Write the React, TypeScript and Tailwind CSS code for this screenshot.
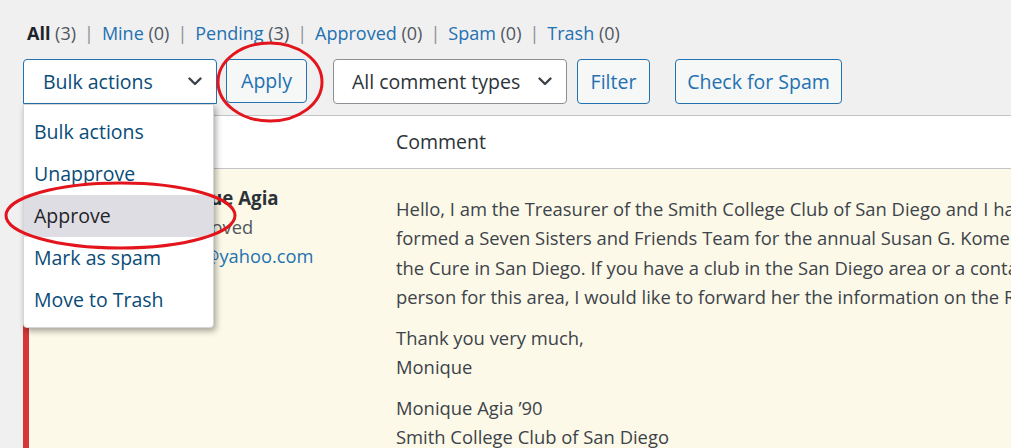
import React from "react";

function Chevron() {
  return (
    <svg width="14" height="9" viewBox="0 0 14 9" className="shrink-0">
      <polyline
        points="1.5,1.5 7,7 12.5,1.5"
        fill="none"
        stroke="#3c434a"
        strokeWidth="2.4"
        strokeLinecap="round"
        strokeLinejoin="round"
      />
    </svg>
  );
}

const links = [
  { label: "All", count: 3, current: true },
  { label: "Mine", count: 0 },
  { label: "Pending", count: 3 },
  { label: "Approved", count: 0 },
  { label: "Spam", count: 0 },
  { label: "Trash", count: 0 },
];

const bulkOptions = ["Bulk actions", "Unapprove", "Approve", "Mark as spam", "Move to Trash"];

export default function App() {
  return (
    <div className="relative h-[448px] w-[1011px] overflow-hidden bg-[#f0f0f1] font-['Open_Sans',sans-serif] text-[#3c434a]">
      {/* status links */}
      <ul className="flex pl-[27px] pt-[20px] text-[18px] leading-[26px]">
        {links.map((l, i) => (
          <li key={l.label} className="flex whitespace-pre">
            {i > 0 && <span className="px-[8px] text-[#8c8f94]">|</span>}
            <span className={l.current ? "font-bold text-[#1d2327]" : "text-[#2271b1]"}>{l.label}</span>
            <span className="text-[#50575e]"> ({l.count})</span>
          </li>
        ))}
      </ul>

      {/* toolbar */}
      <div className="mt-[13px] flex items-start pl-[23px] text-[19.5px]">
        <div className="flex h-[45px] w-[194px] items-center justify-between rounded-t-[4px] border border-[#2271b1] bg-white pl-[19px] pr-[14px] text-[#0a4b78]">
          <span>Bulk actions</span>
          <Chevron />
        </div>
        <button className="ml-[9px] flex h-[44px] w-[81px] items-center justify-center rounded-[4px] border border-[#2271b1] bg-[#f6f7f7] text-[#2271b1]">
          Apply
        </button>
        <div className="ml-[26px] flex h-[45px] w-[234px] items-center justify-between rounded-[4px] border border-[#8c8f94] bg-white pl-[18px] pr-[14px] text-[#2c3338]">
          <span>All comment types</span>
          <Chevron />
        </div>
        <button className="ml-[10px] flex h-[45px] w-[73px] items-center justify-center rounded-[4px] border border-[#2271b1] bg-[#f6f7f7] text-[#2271b1]">
          Filter
        </button>
        <button className="ml-[25px] flex h-[45px] w-[167px] items-center justify-center rounded-[4px] border border-[#2271b1] bg-[#f6f7f7] text-[#2271b1]">
          Check for Spam
        </button>
      </div>

      {/* comments table */}
      <div className="ml-[23px] mt-[11px] w-[1200px]">
        <div className="flex h-[54px] items-center border border-r-0 border-[#c3c4c7] bg-white">
          <div className="w-[362px] pl-[58px] text-[19.5px] text-[#2c3338]">Author</div>
          <div className="pl-[10px] text-[19.5px] text-[#2c3338]">Comment</div>
        </div>
        <div className="flex h-[300px] border-l-[6px] border-[#d63638] bg-[#fcf9e8]">
          <div className="w-[357px] shrink-0 pl-[58px] pt-[13.5px] text-[18.3px] leading-[29.25px]">
            <div className="float-left mr-[12px] mt-[2px] h-[48px] w-[48px] bg-[#c3c4c7]" />
            <div className="whitespace-nowrap text-[18.7px] font-bold text-[#2c3338]">
              <span className="ml-[4px]">Monique Agia</span>
            </div>
            <div className="whitespace-nowrap text-[#50575e]">Unapproved</div>
            <div className="clear-left whitespace-nowrap text-[#2271b1]">monique.agia@yahoo.com</div>
          </div>
          <div className="whitespace-nowrap pl-[10px] pt-[13.5px] text-[18.4px] leading-[29.25px] text-[#3c434a]">
            <p className="my-[11.7px]">
              Hello, I am the Treasurer of the Smith College Club of San Diego and I have
              <br />
              formed a Seven Sisters and Friends Team for the annual Susan G. Komen Race for
              <br />
              the Cure in San Diego. If you have a club in the San Diego area or a contact
              <br />
              person for this area, I would like to forward her the information on the Race.
            </p>
            <p className="my-[11.7px]">
              Thank you very much,
              <br />
              Monique
            </p>
            <p className="my-[11.7px]">
              Monique Agia ’90
              <br />
              Smith College Club of San Diego
            </p>
          </div>
        </div>
      </div>

      {/* open select list */}
      <ul className="absolute left-[23px] top-[104px] w-[191px] rounded-b-[4px] border border-[#d5d5d8] bg-white py-[6px] text-[19.5px] shadow-[2px_3px_6px_rgba(0,0,0,0.35)]">
        {bulkOptions.map((o) => (
          <li
            key={o}
            className={`flex h-[42px] items-center pl-[10px] ${
              o === "Approve" ? "bg-[#dedde3] text-[#1d2327]" : "text-[#0a4b78]"
            }`}
          >
            {o}
          </li>
        ))}
      </ul>

      {/* red annotation rings */}
      <svg className="pointer-events-none absolute left-0 top-0" width="1011" height="448">
        <ellipse cx="270" cy="82" rx="52" ry="39" fill="none" stroke="#e3141b" strokeWidth="3" />
        <ellipse cx="120.5" cy="215.5" rx="114.5" ry="32.5" fill="none" stroke="#e3141b" strokeWidth="3" />
      </svg>
    </div>
  );
}
